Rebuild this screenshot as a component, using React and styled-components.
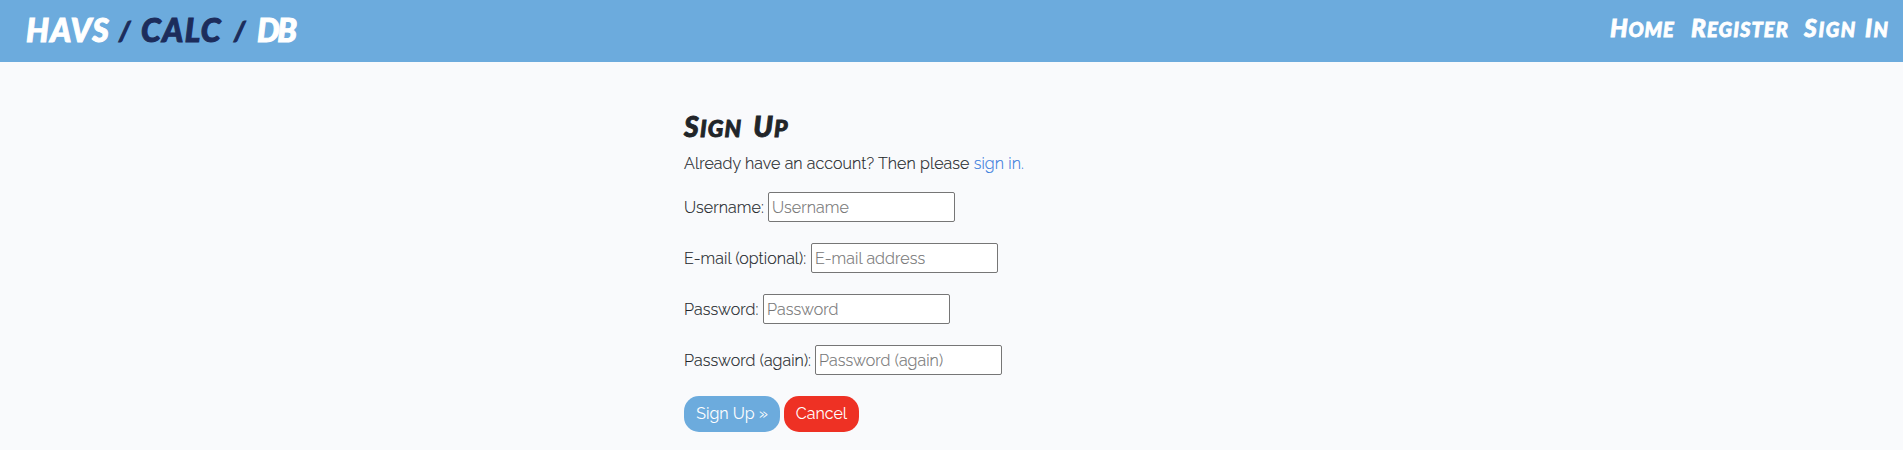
import React from 'react';
import styled, { createGlobalStyle } from 'styled-components';

const GlobalStyle = createGlobalStyle`
  * { box-sizing: border-box; }
  body {
    margin: 0;
    background: #f9fafc;
    color: #212529;
    font: 300 16px/24px Raleway, Lato, "Open Sans", sans-serif;
  }
`;

const marker = '"Permanent Marker", Lato, "Open Sans", sans-serif';

const Header = styled.header`
  display: flex;
  justify-content: space-between;
  align-items: center;
  height: 62px;
  padding: 0 12px 0 26px;
  background: #6cabdd;
  color: #fff;
  font-family: ${marker};
  font-weight: 900;
  font-style: italic;
  white-space: nowrap;
`;

const Logo = styled.a`
  display: flex;
  padding-bottom: 3px;
  font-size: 32px;
  line-height: 40px;
  -webkit-text-stroke: 1px currentColor;
`;

const LogoWord = styled.span`
  width: ${(p) => p.$width}px;
  letter-spacing: ${(p) => p.$spacing || 0}px;
  color: ${(p) => (p.$dark ? '#1c2c5b' : '#fff')};
`;

const Slash = styled.span`
  width: ${(p) => p.$width}px;
  color: #1c2c5b;
  font-size: 26px;
`;

const Nav = styled.nav`
  display: flex;
  gap: 15px;
  padding-bottom: 6px;
  font-size: 20px;
  line-height: 32px;
  -webkit-text-stroke: 0.8px currentColor;
`;

const NavLink = styled.a`
  display: flex;
  gap: 8px;
  width: ${(p) => p.$width}px;
  letter-spacing: ${(p) => p.$spacing || 0}px;
`;

const CapsWord = styled.span`
  display: inline-block;
  text-transform: uppercase;
  &::first-letter { font-size: 1.23em; }
`;

const Main = styled.main`
  width: 535px;
  margin: 0 auto;
  padding-top: 47px;
`;

const Title = styled.h1`
  display: flex;
  gap: 11px;
  margin: 0 0 7px;
  font: italic 900 23px/34px ${marker};
  letter-spacing: 1.2px;
  -webkit-text-stroke: 0.9px currentColor;
`;

const Intro = styled.p`
  margin: 0 0 16px;
  letter-spacing: 0.1px;
  -webkit-text-stroke: 0.15px currentColor;
  white-space: nowrap;
`;

const TextLink = styled.a`
  color: #3b7ddd;
`;

const Field = styled.div`
  display: flex;
  align-items: center;
  height: 30px;
  margin-bottom: 21px;
  letter-spacing: 0.1px;
  -webkit-text-stroke: 0.15px currentColor;
`;

const Label = styled.label`
  width: ${(p) => p.$width}px;
  padding-top: 1px;
  white-space: nowrap;
`;

const Input = styled.input`
  width: 187px;
  height: 30px;
  padding: 1px 3px;
  border: 1px solid #767676;
  border-radius: 2px;
  background: #fff;
  font: inherit;
  letter-spacing: inherit;
  &::placeholder { color: #757575; opacity: 1; }
`;

const Actions = styled.div`
  display: flex;
  gap: 4px;
`;

const Button = styled.button`
  width: ${(p) => p.$width}px;
  height: 36px;
  padding: 0;
  border: 0;
  border-radius: 15px;
  background: ${(p) => (p.$danger ? '#ee3124' : '#6cabdd')};
  color: #fff;
  font: 400 16px/24px Raleway, Lato, "Open Sans", sans-serif;
`;

const fields = [
  { label: 'Username:', hint: 'Username', width: 84 },
  { label: 'E-mail (optional):', hint: 'E-mail address', width: 127 },
  { label: 'Password:', hint: 'Password', width: 79, type: 'password' },
  { label: 'Password (again):', hint: 'Password (again)', width: 131, type: 'password' },
];

const Caps = ({ text }) => text.split(' ').map((word) => <CapsWord key={word}>{word}</CapsWord>);

export default function App() {
  return (
    <>
      <GlobalStyle />
      <Header>
        <Logo>
          <LogoWord $width={93} $spacing={1.2}>HAVS</LogoWord>
          <Slash $width={22}>/</Slash>
          <LogoWord $width={93} $spacing={1.4} $dark>CALC</LogoWord>
          <Slash $width={23}>/</Slash>
          <LogoWord $width={42} $spacing={-2.5}>DB</LogoWord>
        </Logo>
        <Nav>
          <NavLink $width={66} $spacing={0.8}><Caps text="Home" /></NavLink>
          <NavLink $width={98} $spacing={1.1}><Caps text="Register" /></NavLink>
          <NavLink $width={87} $spacing={1.6}><Caps text="Sign In" /></NavLink>
        </Nav>
      </Header>
      <Main>
        <Title><Caps text="Sign Up" /></Title>
        <Intro>
          Already have an account? Then please <TextLink>sign in.</TextLink>
        </Intro>
        {fields.map((f) => (
          <Field key={f.label}>
            <Label $width={f.width}>{f.label}</Label>
            <Input type={f.type || 'text'} placeholder={f.hint} />
          </Field>
        ))}
        <Actions>
          <Button $width={96}>Sign Up »</Button>
          <Button $width={75} $danger>Cancel</Button>
        </Actions>
      </Main>
    </>
  );
}
